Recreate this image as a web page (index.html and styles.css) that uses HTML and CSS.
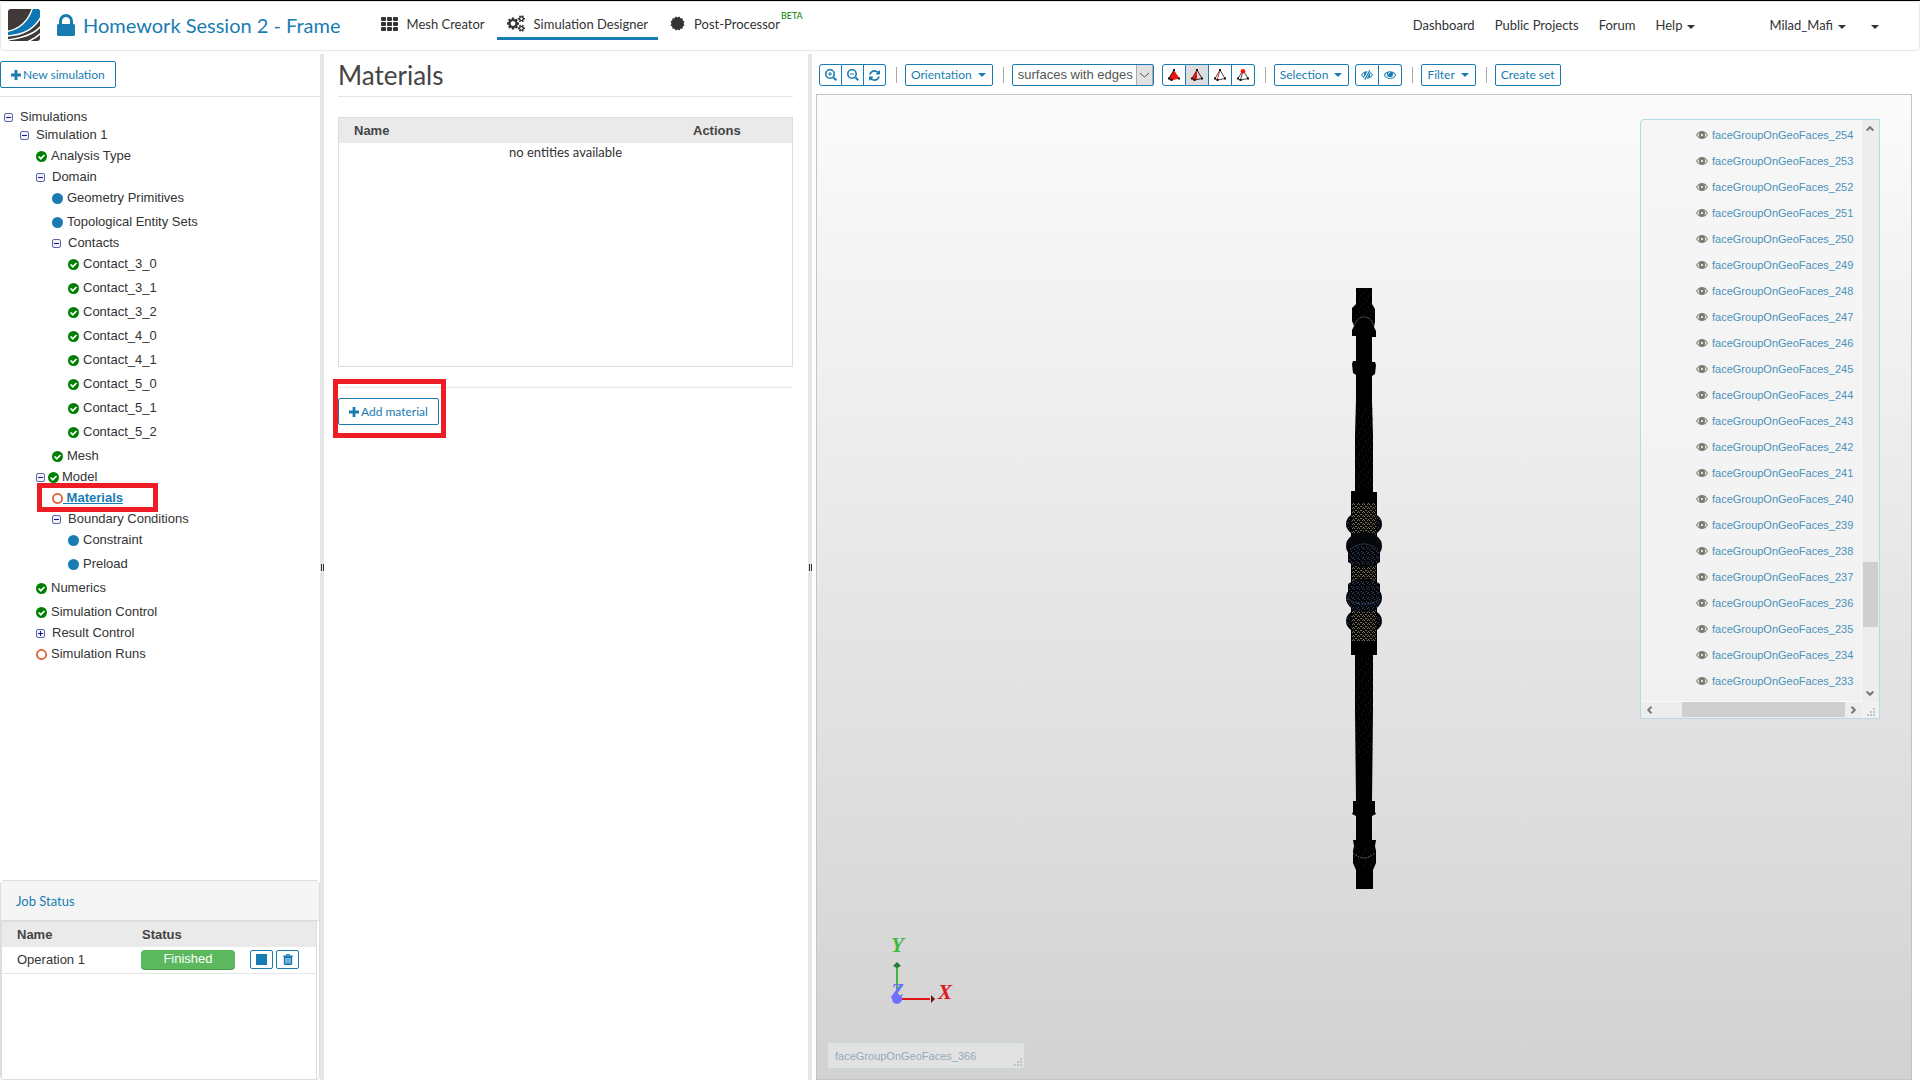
FILE: index.html
```html
<!DOCTYPE html>
<html lang="en">
<head>
<meta charset="utf-8">
<title>Homework Session 2 - Frame</title>
<link rel="stylesheet" href="styles.css">
</head>
<body>
<svg class="defs" aria-hidden="true">
  <symbol id="i-lock" viewBox="320 128 1152 1408"><path d="M640 768h512v-192q0-106-75-181t-181-75-181 75-75 181v192zm832 96v576q0 40-28 68t-68 28h-960q-40 0-68-28t-28-68v-576q0-40 28-68t68-28h32v-192q0-184 132-316t316-132 316 132 132 316v192h32q40 0 68 28t28 68z"/></symbol>
  <symbol id="i-grid" viewBox="0 0 17 14"><path d="M1 0h3a1 1 0 0 1 1 1v2a1 1 0 0 1-1 1H1a1 1 0 0 1-1-1V1a1 1 0 0 1 1-1zm6 0h3a1 1 0 0 1 1 1v2a1 1 0 0 1-1 1H7a1 1 0 0 1-1-1V1a1 1 0 0 1 1-1zm6 0h3a1 1 0 0 1 1 1v2a1 1 0 0 1-1 1h-3a1 1 0 0 1-1-1V1a1 1 0 0 1 1-1zM1 5h3a1 1 0 0 1 1 1v2a1 1 0 0 1-1 1H1a1 1 0 0 1-1-1V6a1 1 0 0 1 1-1zm6 0h3a1 1 0 0 1 1 1v2a1 1 0 0 1-1 1H7a1 1 0 0 1-1-1V6a1 1 0 0 1 1-1zm6 0h3a1 1 0 0 1 1 1v2a1 1 0 0 1-1 1h-3a1 1 0 0 1-1-1V6a1 1 0 0 1 1-1zM1 10h3a1 1 0 0 1 1 1v2a1 1 0 0 1-1 1H1a1 1 0 0 1-1-1v-2a1 1 0 0 1 1-1zm6 0h3a1 1 0 0 1 1 1v2a1 1 0 0 1-1 1H7a1 1 0 0 1-1-1v-2a1 1 0 0 1 1-1zm6 0h3a1 1 0 0 1 1 1v2a1 1 0 0 1-1 1h-3a1 1 0 0 1-1-1v-2a1 1 0 0 1 1-1z"/></symbol>
  <symbol id="i-cogs" viewBox="0 0 1920 1792"><path d="M896 896q0-106-75-181t-181-75-181 75-75 181 75 181 181 75 181-75 75-181zm768 512q0-52-38-90t-90-38-90 38-38 90q0 53 37.500 90.500t90.500 37.500 90.500-37.500 37.500-90.500zm0-1024q0-52-38-90t-90-38-90 38-38 90q0 53 37.500 90.500t90.500 37.500 90.500-37.500 37.500-90.500zm-384 421v185q0 10-7 19.500t-16 10.500l-155 24q-11 35-32 76 34 48 90 115 7 11 7 20 0 12-7 19-23 30-82.500 89.500t-78.500 59.500q-11 0-21-7l-115-90q-37 19-77 31-11 108-23 155-7 24-30 24h-186q-11 0-20-7.500t-10-17.500l-23-153q-34-10-75-31l-118 89q-7 7-20 7-11 0-21-8-144-133-144-160 0-9 7-19 10-14 41-53t47-61q-23-44-35-82l-152-24q-10-1-17-9.500t-7-19.500v-185q0-10 7-19.500t16-10.500l155-24q11-35 32-76-34-48-90-115-7-11-7-20 0-12 7-20 22-30 82-89t79-59q11 0 21 7l115 90q34-18 77-32 11-108 23-154 7-24 30-24h186q11 0 20 7.500t10 17.500l23 153q34 10 75 31l118-89q8-7 20-7 11 0 21 8 144 133 144 160 0 8-7 19-12 16-42 54t-45 60q23 48 34 82l152 23q10 2 17 10.500t7 19.500zm640 533v140q0 16-149 31-12 27-30 52 51 113 51 138 0 4-4 7-122 71-124 71-8 0-46-47t-52-68q-20 2-30 2t-30-2q-14 21-52 68t-46 47q-2 0-124-71-4-3-4-7 0-25 51-138-18-25-30-52-149-15-149-31v-140q0-16 149-31 13-29 30-52-51-113-51-138 0-4 4-7 4-2 35-20t59-34 30-16q8 0 46 46.500t52 67.500q20-2 30-2t30 2q51-71 92-112l6-2q4 0 124 70 4 3 4 7 0 25-51 138 17 23 30 52 149 15 149 31zm0-1024v140q0 16-149 31-12 27-30 52 51 113 51 138 0 4-4 7-122 71-124 71-8 0-46-47t-52-68q-20 2-30 2t-30-2q-14 21-52 68t-46 47q-2 0-124-71-4-3-4-7 0-25 51-138-18-25-30-52-149-15-149-31v-140q0-16 149-31 13-29 30-52-51-113-51-138 0-4 4-7 4-2 35-20t59-34 30-16q8 0 46 46.500t52 67.500q20-2 30-2t30 2q51-71 92-112l6-2q4 0 124 70 4 3 4 7 0 25-51 138 17 23 30 52 149 15 149 31z"/></symbol>
  <symbol id="i-burst" viewBox="-8 -8 16 16"><path d="M-5.500-5.500H5.500V5.500H-5.500z"/><path d="M-5.500-5.500H5.500V5.500H-5.500z" transform="rotate(30)"/><path d="M-5.500-5.500H5.500V5.500H-5.500z" transform="rotate(60)"/></symbol>
  <symbol id="i-plus" viewBox="0 0 10 10"><path d="M3.600 0h2.800v3.600H10v2.800H6.400V10H3.600V6.400H0V3.600h3.600z"/></symbol>
  <symbol id="i-zin" viewBox="0 0 12 12"><path d="M5 0a5 5 0 1 1 0 10A5 5 0 0 1 5 0zm0 1.600a3.400 3.400 0 1 0 0 6.800 3.400 3.400 0 0 0 0-6.800zM4.500 3h1v1.500H7v1H5.500V7h-1V5.500H3v-1h1.500zM7.600 9L9 7.600l3 3L10.600 12z" fill-rule="evenodd"/></symbol>
  <symbol id="i-zout" viewBox="0 0 12 12"><path d="M5 0a5 5 0 1 1 0 10A5 5 0 0 1 5 0zm0 1.600a3.400 3.400 0 1 0 0 6.800 3.400 3.400 0 0 0 0-6.800zM3 4.500h4v1H3zM7.600 9L9 7.600l3 3L10.600 12z" fill-rule="evenodd"/></symbol>
  <symbol id="i-refresh" viewBox="128 128 1536 1536"><path d="M1639 1056q0 5-1 7-64 268-268 434.500t-478 166.500q-146 0-282.500-55t-243.500-157l-129 129q-19 19-45 19t-45-19-19-45v-448q0-26 19-45t45-19h448q26 0 45 19t19 45-19 45l-137 137q71 66 161 102t187 36q134 0 250-65t186-179q11-17 53-117 8-23 30-23h192q13 0 22.500 9.500t9.500 22.500zm25-800v448q0 26-19 45t-45 19h-448q-26 0-45-19t-19-45 19-45l138-138q-148-137-349-137-134 0-250 65t-186 179q-11 17-53 117-8 23-30 23h-199q-13 0-22.500-9.500t-9.500-22.500v-7q65-268 270-434.500t480-166.500q146 0 284 55.500t245 156.500l130-129q19-19 45-19t45 19 19 45z"/></symbol>
  <symbol id="i-eye" viewBox="0 384 1792 1152"><path d="M1664 960q-152-236-381-353 61 104 61 225 0 185-131.500 316.500t-316.500 131.500-316.500-131.500-131.500-316.500q0-121 61-225-229 117-381 353 133 205 333.500 326.500t434.500 121.500 434.500-121.500 333.500-326.500zm-720-384q0-20-14-34t-34-14q-125 0-214.500 89.500t-89.500 214.500q0 20 14 34t34 14 34-14 14-34q0-86 61-147t147-61q20 0 34-14t14-34zm848 384q0 34-20 69-140 230-376.500 368.500t-499.500 138.500-499.500-139-376.500-368q-20-35-20-69t20-69q140-229 376.500-368t499.500-139 499.500 139 376.500 368q20 35 20 69z"/></symbol>
  <symbol id="i-noeye" viewBox="0 0 12 10"><path d="M0 5q2.300-3.700 6-3.700T12 5q-2.300 3.700-6 3.700T0 5zm1 0q2 2.800 5 2.800T11 5Q9.800 3.200 8.300 2.600q.9 1 .9 2.100a3.200 3.200 0 0 1-6.400 0q0-1.200.9-2.100Q2 3.400 1 5z" fill-rule="evenodd"/><path d="M8.600 0L3.400 10" stroke="#fff" stroke-width="2.600"/><path d="M8.800.2L3.800 9.800" stroke="currentColor" stroke-width="1.100"/></symbol>
  <symbol id="i-geye" viewBox="0 0 12 8"><path d="M0 4q2.500-4 6-4t6 4q-2.500 4-6 4T0 4zm1.200 0q1 1.700 2.200 2.300Q2 4 3.400 1.700 2 2.400 1.200 4zm9.600 0Q10 2.400 8.600 1.700 10 4 8.600 6.300 9.800 5.700 10.800 4zM6 2.900a1.100 1.100 0 1 0 0 2.200 1.100 1.100 0 0 0 0-2.200z" fill-rule="evenodd"/></symbol>
  <symbol id="i-trash" viewBox="0 0 10 11"><path d="M3 1.500V.8q0-.8.800-.8h2.400q.8 0 .8.800v.7h3v1H9.200V10q0 1-1 1H1.800q-1 0-1-1V2.500H0v-1zm.9 0h2.200V.9H3.900zM2.600 4v5.500h.8V4zm2 0v5.500h.8V4zm2 0v5.500h.8V4z" fill-rule="evenodd"/></symbol>
  <symbol id="i-ok" viewBox="0 0 11 11"><circle cx="5.500" cy="5.500" r="5.500" fill="#008000"/><path d="M2.600 5.500l2.200 2.200 3.700-3.700" fill="none" stroke="#fff" stroke-width="1.700"/></symbol>
  <symbol id="i-dot" viewBox="0 0 11 11"><circle cx="5.500" cy="5.500" r="5.500" fill="#187cb2"/></symbol>
  <symbol id="i-ring" viewBox="0 0 11 11"><circle cx="5.500" cy="5.500" r="4.600" fill="none" stroke="#e0562b" stroke-width="1.700"/></symbol>
  <symbol id="i-minus" viewBox="0 0 9 9"><rect x=".5" y=".5" width="8" height="8" rx="1.500" fill="#f1f1f6" stroke="#5a68ad"/><path d="M2 4h5v1H2z" fill="#1515a0"/></symbol>
  <symbol id="i-more" viewBox="0 0 9 9"><rect x=".5" y=".5" width="8" height="8" rx="1.500" fill="#f1f1f6" stroke="#5a68ad"/><path d="M2 4h2V2h1v2h2v1H5v2H4V5H2z" fill="#1515a0"/></symbol>
  <symbol id="i-grip" viewBox="0 0 8 8"><path d="M6 0h2v2H6zM3 3h2v2H3zM6 3h2v2H6zM0 6h2v2H0zM3 6h2v2H3zM6 6h2v2H6z" fill="#c3c3c3"/></symbol>
  <symbol id="i-chev" viewBox="0 0 8 8"><path d="M.7 5.500L4 2.200l3.300 3.300" fill="none" stroke="#777" stroke-width="2"/></symbol>
</svg>

<header class="topbar">
  <a class="brand" href="#" aria-label="Home">
    <svg width="32" height="32" viewBox="0 0 32 32"><rect width="32" height="32" rx="3" fill="#3f3a37"/><path d="M24 0h5q3 0 3 3v6Q23 26 0 27v-4Q18 18 24 0z" fill="#0b76b4"/><g fill="none" stroke="#fff" stroke-width="1.400"><path d="M24.500-1Q18 19-1 22.500"/><path d="M33 8Q23 26-1 27"/><path d="M33 17Q24 28-1 31"/><path d="M33 24Q28 29 19 33"/></g></svg>
  </a>
  <h1 class="project"><svg class="lock" width="18" height="22"><use href="#i-lock"/></svg>Homework Session 2 - Frame</h1>
  <nav class="modes">
    <a class="mode" href="#"><svg width="17" height="14"><use href="#i-grid"/></svg>Mesh Creator</a>
    <a class="mode active" href="#"><svg width="18" height="17"><use href="#i-cogs"/></svg>Simulation Designer</a>
    <a class="mode" href="#"><svg width="15" height="15"><use href="#i-burst"/></svg>Post-Processor<sup class="beta">BETA</sup></a>
  </nav>
  <nav class="links">
    <a href="#">Dashboard</a>
    <a href="#">Public Projects</a>
    <a href="#">Forum</a>
    <a href="#">Help<i class="caret"></i></a>
  </nav>
  <nav class="user">
    <a href="#">Milad_Mafi<i class="caret"></i></a>
    <a href="#" aria-label="More"><i class="caret"></i></a>
  </nav>
</header>

<main class="workspace">
  <aside class="side">
    <div class="side-head"><button class="btn btn-lg" type="button"><svg width="10" height="10"><use href="#i-plus"/></svg>New simulation</button></div>
    <ul class="tree">
      <li><span class="node"><svg class="fold"><use href="#i-minus"/></svg>Simulations</span>
      <ul>
        <li><span class="node"><svg class="fold"><use href="#i-minus"/></svg>Simulation 1</span>
        <ul>
          <li><a class="leaf" href="#"><svg class="st"><use href="#i-ok"/></svg>Analysis Type</a></li>
          <li><span class="node"><svg class="fold"><use href="#i-minus"/></svg>Domain</span>
          <ul>
            <li><a class="leaf" href="#"><svg class="st"><use href="#i-dot"/></svg>Geometry Primitives</a></li>
            <li><a class="leaf" href="#"><svg class="st"><use href="#i-dot"/></svg>Topological Entity Sets</a></li>
            <li><span class="node"><svg class="fold"><use href="#i-minus"/></svg>Contacts</span>
            <ul>
              <li><a class="leaf" href="#"><svg class="st"><use href="#i-ok"/></svg>Contact_3_0</a></li>
              <li><a class="leaf" href="#"><svg class="st"><use href="#i-ok"/></svg>Contact_3_1</a></li>
              <li><a class="leaf" href="#"><svg class="st"><use href="#i-ok"/></svg>Contact_3_2</a></li>
              <li><a class="leaf" href="#"><svg class="st"><use href="#i-ok"/></svg>Contact_4_0</a></li>
              <li><a class="leaf" href="#"><svg class="st"><use href="#i-ok"/></svg>Contact_4_1</a></li>
              <li><a class="leaf" href="#"><svg class="st"><use href="#i-ok"/></svg>Contact_5_0</a></li>
              <li><a class="leaf" href="#"><svg class="st"><use href="#i-ok"/></svg>Contact_5_1</a></li>
              <li><a class="leaf" href="#"><svg class="st"><use href="#i-ok"/></svg>Contact_5_2</a></li>
            </ul></li>
            <li><a class="leaf" href="#"><svg class="st"><use href="#i-ok"/></svg>Mesh</a></li>
          </ul></li>
          <li><span class="node with-status"><svg class="fold"><use href="#i-minus"/></svg><svg class="st"><use href="#i-ok"/></svg>Model</span>
          <ul>
            <li class="marked"><a class="leaf current" href="#"><svg class="st"><use href="#i-ring"/></svg><span>&nbsp;Materials</span></a></li>
            <li><span class="node"><svg class="fold"><use href="#i-minus"/></svg>Boundary Conditions</span>
            <ul>
              <li><a class="leaf" href="#"><svg class="st"><use href="#i-dot"/></svg>Constraint</a></li>
              <li><a class="leaf" href="#"><svg class="st"><use href="#i-dot"/></svg>Preload</a></li>
            </ul></li>
          </ul></li>
          <li><a class="leaf" href="#"><svg class="st"><use href="#i-ok"/></svg>Numerics</a></li>
          <li><a class="leaf" href="#"><svg class="st"><use href="#i-ok"/></svg>Simulation Control</a></li>
          <li><span class="node"><svg class="fold"><use href="#i-more"/></svg>Result Control</span></li>
          <li><a class="leaf" href="#"><svg class="st"><use href="#i-ring"/></svg>Simulation Runs</a></li>
        </ul></li>
      </ul></li>
    </ul>
    <section class="jobs">
      <h2 class="jobs-title">Job Status</h2>
      <div class="jobs-body">
        <table class="grid-table">
          <thead><tr><th class="c-name">Name</th><th class="c-status">Status</th><th></th></tr></thead>
          <tbody><tr><td>Operation 1</td><td class="c-status"><span class="badge">Finished</span></td><td><div class="acts"><button class="btn" type="button" aria-label="Stop"><svg width="11" height="11"><rect width="11" height="11"/></svg></button><button class="btn" type="button" aria-label="Delete"><svg width="10" height="11"><use href="#i-trash"/></svg></button></div></td></tr></tbody>
        </table>
      </div>
    </section>
  </aside>
  <div class="splitter"><i></i><i></i></div>

  <section class="panel">
    <h2 class="panel-title">Materials</h2>
    <div class="entities">
      <table class="grid-table">
        <thead><tr><th>Name</th><th class="c-actions">Actions</th></tr></thead>
        <tbody><tr><td class="empty" colspan="2">no entities available</td></tr></tbody>
      </table>
    </div>
    <div class="panel-foot"><div class="highlight"><button class="btn btn-lg" type="button"><svg width="10" height="10"><use href="#i-plus"/></svg>Add material</button></div></div>
  </section>
  <div class="splitter"><i></i><i></i></div>

  <section class="viewer">
    <div class="toolbar">
      <div class="group g22">
        <button class="btn" type="button" aria-label="Zoom in"><svg width="12" height="12"><use href="#i-zin"/></svg></button>
        <button class="btn" type="button" aria-label="Zoom out"><svg width="12" height="12"><use href="#i-zout"/></svg></button>
        <button class="btn" type="button" aria-label="Refresh"><svg width="11" height="11"><use href="#i-refresh"/></svg></button>
      </div>
      <span class="sep"></span>
      <button class="btn" type="button">Orientation<i class="caret"></i></button>
      <span class="sep"></span>
      <label class="pick"><select aria-label="Render mode"><option>surfaces with edges</option></select><svg class="pick-arrow" width="17" height="20" viewBox="0 0 17 20"><path d="M0 0h17v20H0z" fill="#e1e1e1"/><path d="M.5 0v20M16.500 0v20" stroke="#adadad"/><path d="M4 8l4.500 4L13 8" fill="none" stroke="#555"/></svg></label>
      <div class="group g23">
        <button class="btn" type="button" aria-label="Volume"><svg width="12" height="12" viewBox="0 0 12 12"><path d="M6 1l5.500 8.500L3 11.500.8 9z" fill="#e11"/><path d="M6 1L.8 9.500 3.500 11" fill="none" stroke="#222"/><path d="M5 0h2v2H5zM0 8.500h2v2H0zM2.500 10h2v2h-2zM10 8.500h2v2h-2z" fill="#111"/></svg></button>
        <button class="btn on" type="button" aria-label="Face"><svg width="12" height="12" viewBox="0 0 12 12"><path d="M6 1L1 9.500l2.500 1.500L11 9.500z" fill="none" stroke="#222"/><path d="M6 1v9.500l-3.500.5L1.500 9z" fill="#e11"/><path d="M5 0h2v2H5zM0 8.500h2v2H0zM2.500 10h2v2h-2zM10 8.500h2v2h-2z" fill="#111"/></svg></button>
        <button class="btn" type="button" aria-label="Edge"><svg width="12" height="12" viewBox="0 0 12 12"><path d="M6 1L1 9.500l2.500 1.500L11 9.500z" fill="none" stroke="#444"/><path d="M6 1L3.500 10" stroke="#e33"/><path d="M5 0h2v2H5zM0 8.500h2v2H0zM2.500 10h2v2h-2zM10 8.500h2v2h-2z" fill="#111"/></svg></button>
        <button class="btn" type="button" aria-label="Node"><svg width="12" height="12" viewBox="0 0 12 12"><path d="M6 1L1 9.500l2.500 1.500L11 9.500zM6 2L3.500 11" fill="none" stroke="#444"/><path d="M0 8.500h2v2H0zM2.500 10h2v2h-2zM10 8.500h2v2h-2z" fill="#111"/><circle cx="6" cy="2.300" r="2.300" fill="#f11"/></svg></button>
      </div>
      <span class="sep"></span>
      <button class="btn" type="button">Selection<i class="caret"></i></button>
      <div class="group g23 near">
        <button class="btn" type="button" aria-label="Hide"><svg width="12" height="10"><use href="#i-noeye"/></svg></button>
        <button class="btn" type="button" aria-label="Show"><svg width="12" height="8"><use href="#i-eye"/></svg></button>
      </div>
      <span class="sep"></span>
      <button class="btn" type="button">Filter<i class="caret"></i></button>
      <span class="sep"></span>
      <button class="btn" type="button">Create set</button>
    </div>

    <div class="canvas">
      <svg class="model" viewBox="0 0 40 602">
        <defs>
          <pattern id="mesh" width="7" height="11" patternUnits="userSpaceOnUse"><path d="M1 2h1M5 5h1M3 8h1M0 10h1" stroke="#242b33"/></pattern>
          <pattern id="sand" width="5" height="4" patternUnits="userSpaceOnUse"><path d="M0 .5h1M3 .5h1M1 2.500h2M4 3.500h1" stroke="#77705a"/></pattern>
          <pattern id="blue" width="5" height="5" patternUnits="userSpaceOnUse"><path d="M0 1.500h1M3 .5h1M2 3.500h1M4 4.500h1" stroke="#33455f"/></pattern>
        </defs>
        <path d="M12 0h16v16l3 5v13l-1 5 2 4v6h-4v25h3l1 3-1 9-3 2v25l1 35v56h4v163h-4v55l-1 91h3v11l1 2-4 2v24h4l-1 6 1 5v12l-3 7v19H12v-19l-3-7v-12l1-5-1-6h3v-24l-4-2 1-2v-11h3l-1-91v-55H7V203h4v-56l1-35V87l-3-2-1-9 1-3h3V48H8v-6l2-4-2-5V20l4-4z"/>
        <path d="M12 0h16v16l3 5v13h-3q-8-9-16 0H8V20l4-4zM11 120h18v80H11zM11 370h18v100H11zM9 560h22v18H9z" fill="url(#mesh)"/>
        <ellipse cx="20" cy="236" rx="18" ry="13"/><ellipse cx="20" cy="333" rx="18" ry="13"/>
        <ellipse cx="20" cy="236" rx="18" ry="11" fill="url(#blue)"/><ellipse cx="20" cy="333" rx="18" ry="11" fill="url(#blue)"/>
        <path d="M8 215h24v138H8z" fill="#090909"/><path d="M8 215h24v138H8z" fill="url(#sand)"/>
        <g fill="#05070b"><ellipse cx="20" cy="258" rx="18" ry="14"/><path d="M4 262h32v12q-16 11-32 0z"/><ellipse cx="20" cy="310" rx="18" ry="14"/><path d="M4 308v-12q16-11 32 0v12z"/></g>
        <g fill="url(#blue)"><path d="M5 264q15-14 30 0v10q-15 9-30 0z"/><path d="M5 296q15-9 30 0v10q5 8-2 14-13 7-26 0-7-6-2-14z"/></g>
        <path d="M10 38q3-9 10-9t10 9M9 565q11 10 22 0" fill="none" stroke="#8492a6" stroke-dasharray="1 1"/>
        <path d="M6 262q14-12 28 0M3 311q17 10 34 0" fill="none" stroke="#3c5478" stroke-dasharray="2 1"/>
      </svg>

      <svg class="axes" width="80" height="82" viewBox="0 -10 80 82">
        <path d="M12 61V30" stroke="#3eb93e" stroke-width="2"/><path d="M8 30l4-4 4 4-4 2z" fill="#277a34"/>
        <path d="M14 63h31" stroke="#e0161b" stroke-width="2"/><path d="M46 59l4 4-4 4z" fill="#7b1014"/>
        <circle cx="12" cy="63" r="5" fill="#7070ff"/>
        <g class="axis-text"><text x="6" y="16" fill="#3eb93e">Y</text><text x="6" y="62" fill="#7070ff">Z</text><text x="53" y="63" fill="#e0161b">X</text></g>
      </svg>

      <div class="faces">
        <ul class="face-list">
          <li><svg><use href="#i-geye"/></svg><a href="#">faceGroupOnGeoFaces_254</a></li>
          <li><svg><use href="#i-geye"/></svg><a href="#">faceGroupOnGeoFaces_253</a></li>
          <li><svg><use href="#i-geye"/></svg><a href="#">faceGroupOnGeoFaces_252</a></li>
          <li><svg><use href="#i-geye"/></svg><a href="#">faceGroupOnGeoFaces_251</a></li>
          <li><svg><use href="#i-geye"/></svg><a href="#">faceGroupOnGeoFaces_250</a></li>
          <li><svg><use href="#i-geye"/></svg><a href="#">faceGroupOnGeoFaces_249</a></li>
          <li><svg><use href="#i-geye"/></svg><a href="#">faceGroupOnGeoFaces_248</a></li>
          <li><svg><use href="#i-geye"/></svg><a href="#">faceGroupOnGeoFaces_247</a></li>
          <li><svg><use href="#i-geye"/></svg><a href="#">faceGroupOnGeoFaces_246</a></li>
          <li><svg><use href="#i-geye"/></svg><a href="#">faceGroupOnGeoFaces_245</a></li>
          <li><svg><use href="#i-geye"/></svg><a href="#">faceGroupOnGeoFaces_244</a></li>
          <li><svg><use href="#i-geye"/></svg><a href="#">faceGroupOnGeoFaces_243</a></li>
          <li><svg><use href="#i-geye"/></svg><a href="#">faceGroupOnGeoFaces_242</a></li>
          <li><svg><use href="#i-geye"/></svg><a href="#">faceGroupOnGeoFaces_241</a></li>
          <li><svg><use href="#i-geye"/></svg><a href="#">faceGroupOnGeoFaces_240</a></li>
          <li><svg><use href="#i-geye"/></svg><a href="#">faceGroupOnGeoFaces_239</a></li>
          <li><svg><use href="#i-geye"/></svg><a href="#">faceGroupOnGeoFaces_238</a></li>
          <li><svg><use href="#i-geye"/></svg><a href="#">faceGroupOnGeoFaces_237</a></li>
          <li><svg><use href="#i-geye"/></svg><a href="#">faceGroupOnGeoFaces_236</a></li>
          <li><svg><use href="#i-geye"/></svg><a href="#">faceGroupOnGeoFaces_235</a></li>
          <li><svg><use href="#i-geye"/></svg><a href="#">faceGroupOnGeoFaces_234</a></li>
          <li><svg><use href="#i-geye"/></svg><a href="#">faceGroupOnGeoFaces_233</a></li>
        </ul>
        <div class="vbar"><svg class="chev"><use href="#i-chev"/></svg><div class="track"><span class="thumb"></span></div><svg class="chev down"><use href="#i-chev"/></svg></div>
        <div class="hbar"><svg class="chev left"><use href="#i-chev"/></svg><div class="track"><span class="thumb"></span></div><svg class="chev right"><use href="#i-chev"/></svg></div>
        <svg class="grip"><use href="#i-grip"/></svg>
      </div>

      <div class="hover-label">faceGroupOnGeoFaces_366<svg class="grip"><use href="#i-grip"/></svg></div>
    </div>
  </section>
</main>
</body>
</html>
```
FILE: styles.css
```css
*, *::before, *::after { box-sizing: border-box; }
html, body { height: 100%; }
body {
  margin: 0;
  display: flex;
  flex-direction: column;
  border-top: 1px solid #000;
  background: #fff;
  color: #333;
  font: 13px/18px "Liberation Sans", Arial, sans-serif;
}
a { color: inherit; text-decoration: none; }
ul { list-style: none; margin: 0; padding: 0; }
svg { flex: none; fill: currentColor; }
.defs { position: absolute; width: 0; height: 0; }

.caret {
  display: inline-block;
  margin-left: 5px;
  vertical-align: middle;
  border: 4px solid transparent;
  border-top-color: currentColor;
  border-bottom: 0;
}

/* top bar */
.topbar {
  display: flex;
  align-items: center;
  height: 50px;
  padding: 0 40px 2px 7px;
  border: 1px solid #e7e7e7;
  border-radius: 4px;
  font: 13px/20px Lato, sans-serif;
}
.brand { height: 32px; }
.project {
  display: flex;
  align-items: center;
  gap: 8px;
  margin: 0 30px 0 17px;
  font-size: 20px;
  font-weight: 400;
  line-height: 24px;
  color: #187cb2;
  white-space: nowrap;
}
.modes { display: flex; align-items: center; gap: 2px; }
.mode {
  display: flex;
  align-items: center;
  gap: 9px;
  height: 30px;
  padding: 0 10px;
  border-bottom: 3px solid transparent;
  white-space: nowrap;
}
.mode.active { border-bottom-color: #187cb2; }
.beta { margin: -16px 0 0 -8px; font-size: 9px; line-height: 12px; color: #008000; }
.links, .user { display: flex; gap: 20px; white-space: nowrap; }
.links { margin-left: auto; }
.user { margin-left: 74px; }

/* workspace */
.workspace {
  flex: 1;
  display: grid;
  grid-template-columns: 320px 4px minmax(0, 484fr) 4px minmax(0, 1108fr);
  padding-top: 3px;
}
.splitter { display: flex; align-items: center; justify-content: flex-end; gap: 1px; background: #e6e6e6; }
.splitter i { width: 1px; height: 7px; background: #333; }

.btn {
  display: inline-flex;
  align-items: center;
  justify-content: center;
  height: 22px;
  padding: 0 5px;
  border: 1px solid #187cb2;
  border-radius: 2px;
  background: #fff;
  color: #187cb2;
  font: 12px/18px Lato, sans-serif;
  white-space: nowrap;
}
.btn .caret { margin: 0 1px 0 6px; }
.btn-lg { height: 27px; padding: 0 10px; gap: 2px; }

/* side pane */
.side { display: flex; flex-direction: column; }
.side-head { padding: 7px 0 8px; border-bottom: 1px solid #e1e1e1; }
.side-head .btn { display: flex; }
.tree { padding: 11px 0 0 4px; }
.tree ul { padding-left: 16px; }
.tree .node, .tree .leaf { display: flex; align-items: center; height: 18px; }
.tree .leaf { height: 24px; gap: 4px; }
.tree .node { gap: 7px; }
.tree .with-status { gap: 3px; }
.fold { width: 9px; height: 9px; }
.st { width: 11px; height: 11px; }
.current { color: #187cb2; font-weight: 700; }
.tree .current { gap: 0; }
.current span { text-decoration: underline; }
.marked { position: relative; }
.marked::after {
  content: "";
  position: absolute;
  left: -15px;
  top: -3px;
  width: 121px;
  height: 29px;
  border: 5px solid #ee1c24;
  pointer-events: none;
}

.jobs {
  display: flex;
  flex-direction: column;
  height: 200px;
  margin-top: auto;
  border: 1px solid #ddd;
  border-radius: 4px;
}
.jobs-title {
  margin: 0;
  padding: 10px 15px 9px;
  border-bottom: 1px solid #ddd;
  background: #f5f5f5;
  color: #187cb2;
  font: 13px/20px Lato, sans-serif;
}
.jobs-body { flex: 1; margin: 0 2px 0 0; border: 1px solid #ddd; border-bottom: 0; }
.grid-table { width: 100%; border-collapse: collapse; table-layout: fixed; }
.grid-table th { height: 25px; padding: 0 0 0 15px; background: #eaeaea; color: #444; text-align: left; }
.grid-table td { padding: 0 0 0 15px; }
.jobs td { height: 26px; border-bottom: 1px solid #e6e6e6; }
.jobs .c-name { width: 139px; }
.jobs .c-status { width: 97px; padding-left: 0; }
th.c-status { text-indent: 1px; }
.badge {
  display: block;
  width: 94px;
  height: 20px;
  border-bottom: 1px solid #4b9a4b;
  border-radius: 4px;
  background: #5cb85c;
  color: #fff;
  text-align: center;
}
.jobs td:last-child { padding-left: 12px; }
.acts { display: flex; gap: 3px; }
.acts .btn { width: 23px; height: 19px; padding: 0; }

/* materials pane */
.panel { padding: 0 15px 0 14px; }
.panel-title {
  margin: 0 0 20px;
  padding: 6px 0;
  border-bottom: 1px solid #e6e6e6;
  color: #444;
  font: 26px/30px Lato, sans-serif;
}
.entities { height: 250px; border: 1px solid #ddd; }
.c-actions { width: 99px; }
.panel .grid-table .c-actions { padding-left: 0; }
.panel .grid-table .empty { padding: 0; text-align: center; font: 13px/18px Lato, sans-serif; }
.panel-foot { margin-top: 20px; padding-top: 10px; border-top: 1px solid #e6e6e6; }
.highlight { position: relative; width: max-content; }
.highlight .btn { display: flex; }
.highlight::after {
  content: "";
  position: absolute;
  inset: -19px -7px -13px -5px;
  border: 5px solid #ee1c24;
  pointer-events: none;
}
.panel-title + .entities { margin-top: 20px; }

/* viewer */
.viewer { display: flex; flex-direction: column; padding: 0 8px 0 4px; }
.toolbar { display: flex; align-items: center; padding: 10px 0 8px 3px; }
.sep { width: 1px; height: 16px; margin: 0 8px 0 10px; background: #b0a8a8; }
.group { display: flex; }
.group .btn { padding: 0; border-radius: 0; }
.group .btn + .btn { border-left: 0; }
.group .btn:first-child { border-radius: 3px 0 0 3px; }
.group .btn:last-child { border-radius: 0 3px 3px 0; }
.g22 .btn { width: 22px; }
.g22 .btn:first-child { width: 23px; }
.g23 .btn { width: 23px; }
.g23 .btn:first-child { width: 24px; }
.g23 { margin-left: 8px; }
.near { margin-left: 6px; }
.group .on { background: #ddd; }
.pick { position: relative; display: block; }
.pick select {
  display: block;
  appearance: none;
  width: 142px;
  height: 22px;
  padding: 0 18px 0 5px;
  border: 1px solid #187cb2;
  border-radius: 2px;
  background: #fff;
  color: #555;
  font: 13px/18px "Liberation Sans", Arial, sans-serif;
}
.pick-arrow { position: absolute; right: 1px; top: 1px; pointer-events: none; }

.canvas {
  position: relative;
  flex: 1;
  border: 1px solid #c4c4c4;
  background: linear-gradient(#fbfbfb, #d2d2d2);
}
.model { position: absolute; left: 50%; top: 193px; width: 40px; height: 602px; margin-left: -20px; fill: #000; }
.axes { position: absolute; left: 68px; bottom: 71px; }
.axis-text { font: italic 700 21px "Liberation Serif", "Times New Roman", serif; }

.faces {
  position: absolute;
  top: 24px;
  right: 31px;
  display: grid;
  grid-template-columns: 1fr 17px;
  grid-template-rows: auto 16px;
  width: 240px;
  border: 1px solid #b5dbe8;
  border-radius: 4px 0 0 0;
  background: rgba(245, 245, 245, 0.8);
}
.face-list { padding: 2px 0 7px 55px; border: solid #fafafa; border-width: 0 1px 1px 0; }
.face-list li { display: flex; align-items: center; gap: 4px; height: 26px; color: #7d7a70; }
.face-list a { color: #4a92ba; }
.face-list svg { width: 12px; height: 8px; }
.face-list a, .hover-label { font-size: 11px; line-height: 16px; }
.vbar, .hbar { display: flex; align-items: center; justify-content: space-between; background: #ededed; }
.vbar { flex-direction: column; padding: 5px 0; }
.hbar { padding: 0 5px; }
.track { display: flex; flex: 1; align-items: stretch; }
.vbar .track { flex-direction: column; width: 15px; margin-right: 1px; }
.hbar .track { align-self: stretch; }
.thumb { background: #cfcfcf; }
.vbar .thumb { height: 65px; margin-top: 429px; }
.hbar .thumb { flex: 1; margin: 0 4px 1px 28px; }
.chev { width: 8px; height: 8px; }
.vbar .chev { margin-right: 1px; }
.down { transform: rotate(180deg); }
.left { transform: rotate(-90deg); }
.right { transform: rotate(90deg); }
.faces .grip { align-self: end; }
.grip { width: 8px; height: 8px; margin: 0 0 2px 5px; }

.hover-label {
  position: absolute;
  left: 10px;
  bottom: 10px;
  display: flex;
  align-items: center;
  justify-content: space-between;
  width: 198px;
  height: 27px;
  padding: 0 2px 0 7px;
  border: 1px solid #c8d8de;
  border-radius: 3px;
  background: #e2e2e2;
  color: #93acba;
}
.hover-label .grip { align-self: flex-end; }
```
